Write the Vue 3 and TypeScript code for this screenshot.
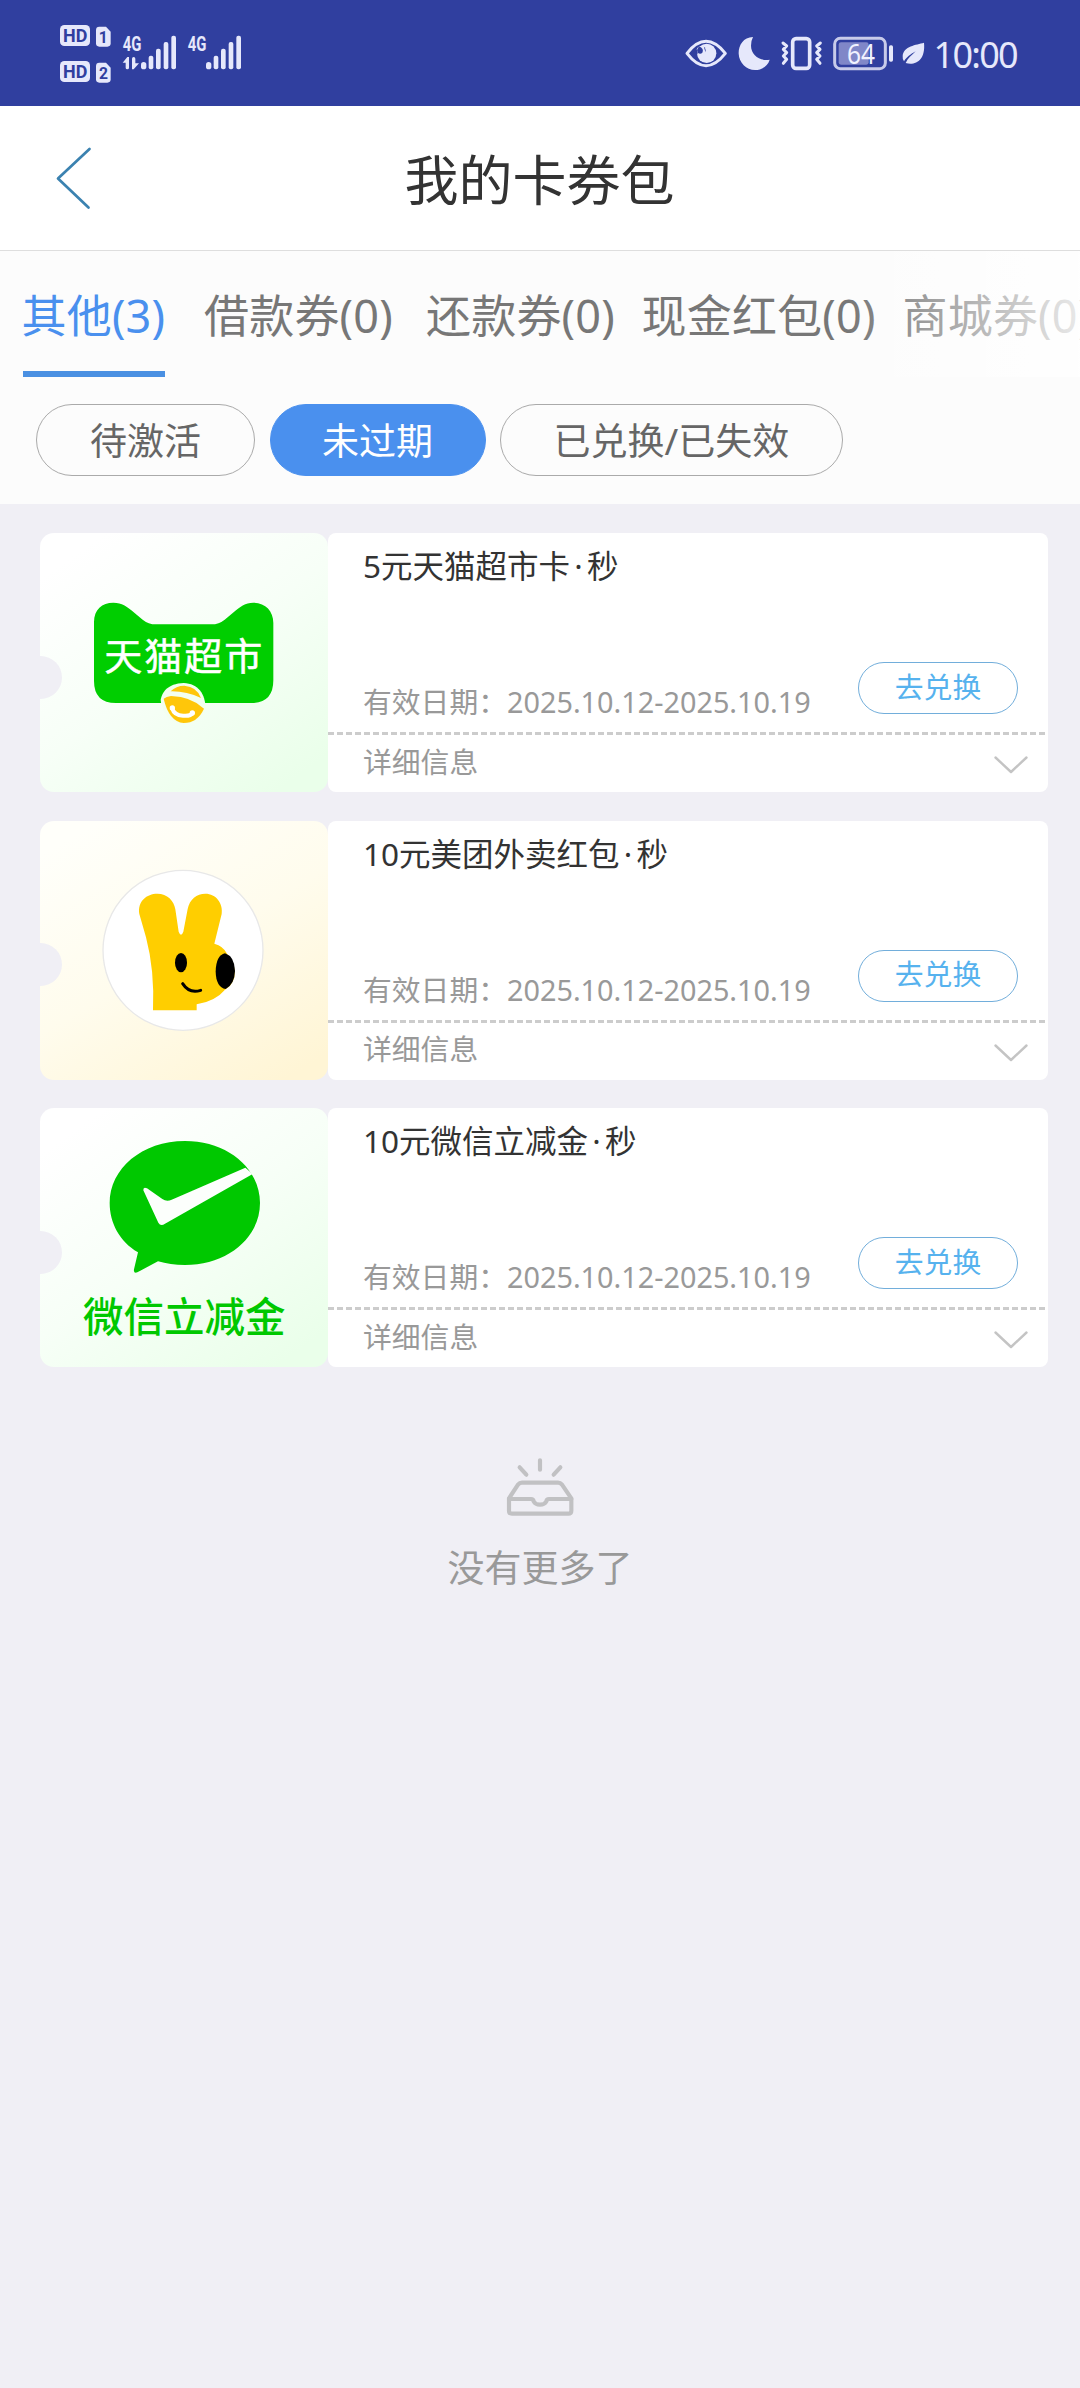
<script setup lang="ts">
import { ref } from 'vue'

type Brand = 'tmall' | 'meituan' | 'wechat'

interface Coupon {
  brand: Brand
  name: string
  suffix: string
  period: string
}

const tabs = [
  { label: '其他(3)', width: 182.5 },
  { label: '借款券(0)', width: 222 },
  { label: '还款券(0)', width: 215.5 },
  { label: '现金红包(0)', width: 261 },
  { label: '商城券(0)', width: 190 },
]
const filters = ['待激活', '未过期', '已兑换/已失效']
const activeTab = ref(0)
const activeFilter = ref(1)

const coupons: Coupon[] = [
  { brand: 'tmall', name: '5元天猫超市卡', suffix: '秒', period: '2025.10.12-2025.10.19' },
  { brand: 'meituan', name: '10元美团外卖红包', suffix: '秒', period: '2025.10.12-2025.10.19' },
  { brand: 'wechat', name: '10元微信立减金', suffix: '秒', period: '2025.10.12-2025.10.19' },
]
</script>

<template>
  <div class="page" lang="zh-CN">
    <div class="status">
      <svg class="status-left" viewBox="0 0 660 318" width="220" height="106">
        <g fill="#e6e8fb">
          <rect x="60" y="75" width="90" height="63" rx="13" />
          <rect x="60" y="183" width="90" height="63" rx="13" />
          <path d="M178 80H198L212 95V130Q212 140 202 140H178Q168 140 168 130V90Q168 80 178 80Z" />
          <path d="M178 188H198L212 203V238Q212 248 202 248H178Q168 248 168 238V198Q168 188 178 188Z" />
          <path d="M248 188L262 171H267V203Q267 208 262 208Q257 208 257 203V188Z" />
          <path d="M276 176Q276 171 281 171Q286 171 286 176V190H297L281 208H276Z" />
          <g v-for="x in [0, 195]" :key="x">
            <rect :x="303 + x" y="186" width="16" height="22" rx="8" />
            <rect :x="326 + x" y="167" width="14" height="41" rx="6" />
            <rect :x="348 + x" y="146" width="14" height="62" rx="6" />
            <rect :x="371 + x" y="126" width="14" height="82" rx="6" />
            <rect :x="394 + x" y="107" width="14" height="101" rx="6" />
          </g>
        </g>
        <g class="glyph">
          <text x="69" y="126" font-size="55" fill="#303f9f" textLength="73" lengthAdjust="spacingAndGlyphs">HD</text>
          <text x="69" y="234" font-size="55" fill="#303f9f" textLength="73" lengthAdjust="spacingAndGlyphs">HD</text>
          <text x="176" y="130" font-size="52" fill="#303f9f" textLength="27" lengthAdjust="spacingAndGlyphs">1</text>
          <text x="177" y="238" font-size="52" fill="#303f9f" textLength="27" lengthAdjust="spacingAndGlyphs">2</text>
          <text x="248" y="152" font-size="60" fill="#e6e8fb" textLength="56" lengthAdjust="spacingAndGlyphs">4G</text>
          <text x="443" y="152" font-size="60" fill="#e6e8fb" textLength="56" lengthAdjust="spacingAndGlyphs">4G</text>
        </g>
      </svg>
      <div class="status-right">
        <svg viewBox="40 0 740 318" width="246.7" height="106">
          <path d="M58 160Q86 124 115 124Q144 124 173 160Q144 197 115 197Q86 197 58 160Z" fill="none" stroke="#e6e8fb" stroke-width="9" stroke-linejoin="round" />
          <circle cx="117" cy="160" r="29" fill="#e6e8fb" />
          <circle cx="100" cy="152" r="14" fill="#303f9f" />
          <path d="M87 148A17 17 0 0 1 108 138L112 152A13 13 0 0 1 93 170Z" fill="#e6e8fb" />
          <path d="M94 139Q110 146 104 158Q98 164 90 158L88 150Z" fill="#303f9f" />
          <path d="M256 111C226 112 212 137 213 161C214 188 236 210 262 210C284 210 300 198 306 179C278 185 250 165 250 137Q250 122 256 111Z" fill="#e6e8fb" />
          <rect x="375" y="116" width="51" height="89" rx="10" fill="none" stroke="#e6e8fb" stroke-width="11" />
          <path d="M346 129L357 138L347 148L357 158L347 168L357 178L347 190M458 129L447 138L457 148L447 158L457 168L447 178L457 190" fill="none" stroke="#e6e8fb" stroke-width="9" stroke-linecap="round" stroke-linejoin="round" />
          <rect x="501" y="115" width="152" height="91" rx="17" fill="none" stroke="#c8cbea" stroke-width="9" />
          <rect x="513" y="127" width="90" height="67" rx="7" fill="#8087c8" />
          <rect x="664" y="136" width="12" height="49" rx="5" fill="#e6e8fb" />
          <text class="battery" x="538" y="191" font-size="79" textLength="84" lengthAdjust="spacingAndGlyphs">64</text>
          <path d="M769 128C745 135 708 138 705 168Q704 178 709 184C718 170 727 164 744 154C731 167 721 174 714 189C744 197 774 181 769 128Z" fill="#e6e8fb" />
        </svg>
        <span class="clock">10:00</span>
      </div>
    </div>

    <header class="header">
      <svg class="back" viewBox="0 0 36 64" width="36" height="64">
        <path d="M33.5 3L2 32.500L32.500 61.500" fill="none" stroke="#3b82b0" stroke-width="2.700" stroke-linecap="round" stroke-linejoin="round" />
      </svg>
      <h1>我的卡券包</h1>
    </header>

    <section class="toolbar">
      <nav class="tabs">
        <button
          v-for="(tab, i) in tabs"
          :key="tab.label"
          class="tab"
          :class="{ active: i === activeTab }"
          :style="{ width: tab.width + 'px' }"
          @click="activeTab = i"
        >
          <span>{{ tab.label }}</span>
        </button>
      </nav>
      <div class="filters">
        <button
          v-for="(f, i) in filters"
          :key="f"
          class="pill"
          :class="{ active: i === activeFilter }"
          @click="activeFilter = i"
        >{{ f }}</button>
      </div>
    </section>

    <main class="list">
      <article v-for="c in coupons" :key="c.brand" class="card">
        <div class="cover" :class="c.brand">
          <svg v-if="c.brand === 'tmall'" viewBox="30 38 864 777" width="288" height="259">
            <path d="M192 305C192 268 216 247 250 247C277 247 291 259 304 270L338 298Q355 312 378 312H544Q567 312 584 298L618 270C631 259 645 247 670 247C706 247 730 272 730 308V480Q730 548 664 548H258Q192 548 192 482Z" fill="#00ce00" />
            <text class="logo-name" x="223" y="449" font-size="114" letter-spacing="6" fill="#fff" stroke="#fff" stroke-width="1.500">天猫超市</text>
            <path d="M392 539C396 516 412 490 461 488C505 490 526 520 527 566C515 598 490 611 461 611C426 611 397 584 392 539Z" fill="#f3fff0" />
            <path d="M422 513Q438 496 463 496Q501 499 513 533Q469 512 422 513Z" fill="#ffc60a" />
            <path d="M401 535Q409 529 423 527Q485 529 522 565Q502 608 461 608Q417 604 401 535Z" fill="#ffc60a" />
            <path d="M427 565Q432 584 459 586Q482 588 487 578" fill="none" stroke="#fff" stroke-width="12" stroke-linecap="round" />
            <circle cx="427" cy="563" r="8" fill="#fff" />
            <circle cx="487" cy="578" r="8" fill="#fff" />
          </svg>
          <svg v-else-if="c.brand === 'meituan'" viewBox="30 33 864 777" width="288" height="259">
            <circle cx="459" cy="421" r="240" fill="#fff" stroke="#e8e8e8" stroke-width="4" />
            <path d="M328 312C322 274 350 251 382 251C412 251 432 272 436 298L446 365Q453 383 460 365L473 297C479 268 500 251 526 251C558 251 580 280 575 312L553 401Q580 408 591 431Q620 462 613 502Q606 528 585 539Q557 573 500 583V601H369Q374 480 348 382Z" fill="#ffce00" />
            <ellipse cx="453" cy="458" rx="18" ry="29" fill="#000" />
            <path d="M585 430Q614 440 615 483Q614 522 587 537Q558 531 557 485Q558 436 585 430Z" fill="#000" />
            <path d="M458 521Q478 552 512 541" fill="none" stroke="#000" stroke-width="9" stroke-linecap="round" />
          </svg>
          <svg v-else viewBox="30 24 864 777" width="288" height="259">
            <path d="M465 123C594 123 690 206 690 309C690 412 594 495 465 495Q420 495 384 484L322 517Q310 521 312 508L324 457C268 424 239 368 239 309C239 206 336 123 465 123Z" fill="#00c800" />
            <path d="M340 271Q339 260 351 265L397 297Q410 306 425 299L646 203L668 222L405 371Q392 380 385 368Z" fill="#fcfffc" />
            <text class="logo-name medium" x="159" y="696" font-size="121.500" fill="#00c800">微信立减金</text>
          </svg>
        </div>
        <div class="body">
          <div class="top">
            <h2>{{ c.name }}<i class="dot">·</i>{{ c.suffix }}</h2>
            <div class="row">
              <span class="period">有效日期：<b>{{ c.period }}</b></span>
              <button class="redeem">去兑换</button>
            </div>
          </div>
          <div class="detail">
            <span>详细信息</span>
            <svg viewBox="0 0 34 18" width="34" height="18">
              <path d="M1.500 1.500L17 16L32.500 1.500" fill="none" stroke="#c4c4c4" stroke-width="2.400" stroke-linecap="round" stroke-linejoin="round" />
            </svg>
          </div>
        </div>
      </article>
    </main>

    <footer class="empty">
      <svg viewBox="258 84 204 174" width="68" height="58">
        <g fill="none" stroke="#c1c1c3" stroke-width="12.500" stroke-linejoin="round" stroke-linecap="round">
          <path d="M360 91V119M299 112L319 134M421 112L401 134" />
          <path d="M267 205L294 164Q299 158 306 158H414Q421 158 426 164L454 205V242Q454 251 445 251H276Q267 251 267 242Z" />
          <path d="M267 207H333Q340 207 341 214Q346 224 360 224Q374 224 379 214Q380 207 387 207H454" />
        </g>
      </svg>
      <p>没有更多了</p>
    </footer>
  </div>
</template>

<style>
body {
  background: #f0eff5;
}
</style>

<style scoped>
.page {
  width: 1080px;
  height: 2388px;
  overflow: hidden;
  background: #f0eff5;
  font-family: 'Noto Sans', 'Noto Sans CJK SC', sans-serif;
  color: #333;
}
button {
  margin: 0;
  padding: 0;
  border: 0;
  background: none;
  font-family: inherit;
  color: inherit;
}
svg {
  display: block;
  flex: none;
}
.status {
  display: flex;
  justify-content: space-between;
  height: 106px;
  padding: 0 60px 0 40px;
  background: #303f9f;
}
.status-right {
  display: flex;
}
.glyph {
  font-family: Roboto, sans-serif;
  font-weight: 700;
}
.battery {
  fill: #f1f2ff;
}
.clock {
  width: 86.500px;
  margin-left: 6px;
  font-size: 36px;
  line-height: 109px;
  letter-spacing: -1.7px;
  color: #e6e8fb;
  white-space: nowrap;
}
.header {
  display: flex;
  align-items: center;
  height: 144px;
  padding: 0 56px;
  border-bottom: 1px solid #dedede;
  background: #fff;
}
.header h1 {
  flex: 1;
  margin: 3px 37px 0 0;
  text-align: center;
  font-size: 54px;
  font-weight: 400;
  line-height: 80px;
}
.toolbar {
  height: 253px;
  background: #fcfcfc;
}
.tabs {
  position: relative;
  display: flex;
  height: 126px;
  padding-left: 23.500px;
  overflow: hidden;
}
.tabs::after {
  content: '';
  position: absolute;
  inset: 0 0 0 auto;
  width: 232px;
  background: linear-gradient(90deg, rgba(255, 255, 255, 0), rgba(255, 255, 255, 0.84));
}
.tab {
  flex: none;
  text-align: left;
  font-size: 45px;
  line-height: 130px;
  letter-spacing: 0.200px;
  text-indent: -1px;
  color: #777;
  white-space: nowrap;
}
.tab span {
  display: inline-block;
  height: 120px;
}
.tab.active {
  color: #4a90ee;
}
.tab.active span {
  width: 142px;
  border-bottom: 6px solid #4a90e2;
}
.filters {
  display: flex;
  gap: 14.500px;
  padding: 27px 36px 0;
}
.pill {
  height: 72px;
  padding: 0 53px;
  border: 1px solid #aaa;
  border-radius: 36px;
  font-size: 37px;
  line-height: 71px;
  color: #666;
}
.pill.active {
  padding: 0 51.500px;
  border-color: #4a90ee;
  background: #4a90ee;
  line-height: 67px;
  color: #fff;
}
.pill:last-child {
  padding: 0 52.500px;
}
.list {
  display: flex;
  flex-direction: column;
  gap: 28.700px;
  padding: 29px 32px 0 40px;
}
.card {
  display: flex;
  height: 259px;
}
.cover {
  position: relative;
  width: 288px;
  border-radius: 14px;
  overflow: hidden;
  background: linear-gradient(145deg, #fff 10%, #f7fff7 50%, #eaffea 92%);
}
.cover.meituan {
  background: linear-gradient(150deg, #fffffa 8%, #fffced 50%, #fff5d5 94%);
}
.cover::before {
  content: '';
  position: absolute;
  left: -21px;
  top: 122.500px;
  width: 43px;
  height: 43px;
  border-radius: 50%;
  background: #f0eff5;
}
.logo-name {
  font-family: 'Noto Sans CJK SC', sans-serif;
}
.logo-name.medium {
  font-weight: 500;
}
.body {
  flex: 1;
  display: flex;
  flex-direction: column;
  border-radius: 8px;
  background: #fff;
}
.top {
  display: flex;
  flex-direction: column;
  justify-content: space-between;
  height: 199px;
  padding: 10px 30px 0 35px;
  box-sizing: border-box;
}
.top h2 {
  margin: 0;
  font-size: 31.500px;
  font-weight: 400;
  line-height: 46px;
}
.dot {
  display: inline-block;
  width: 17px;
  text-align: center;
  font-style: normal;
}
.row {
  display: flex;
  justify-content: space-between;
  align-items: flex-end;
  padding-bottom: 18px;
}
.period {
  font-size: 28.800px;
  line-height: 40px;
  color: #999;
  margin-bottom: -8px;
}
.period b {
  font-weight: 400;
}
.redeem {
  width: 160px;
  height: 52px;
  border: 1px solid #72aedb;
  border-radius: 26px;
  font-size: 28.800px;
  line-height: 44px;
  padding-bottom: 3px;
  color: #56b2ee;
}
.detail {
  display: flex;
  justify-content: space-between;
  align-items: center;
  height: 60px;
  padding: 0 20px 0 35px;
  box-sizing: border-box;
  background: repeating-linear-gradient(90deg, #ccc 0 6px, transparent 6px 9px) 0 0 / 100% 3px no-repeat;
  font-size: 28.800px;
  line-height: 40px;
  color: #999;
}
.detail span {
  margin-top: -1px;
}
.detail svg {
  margin-top: 6px;
}
.empty {
  display: flex;
  flex-direction: column;
  align-items: center;
  padding-top: 91px;
}
.empty p {
  margin: 25px 0 0;
  font-size: 37px;
  line-height: 54px;
  color: #999;
}
</style>
